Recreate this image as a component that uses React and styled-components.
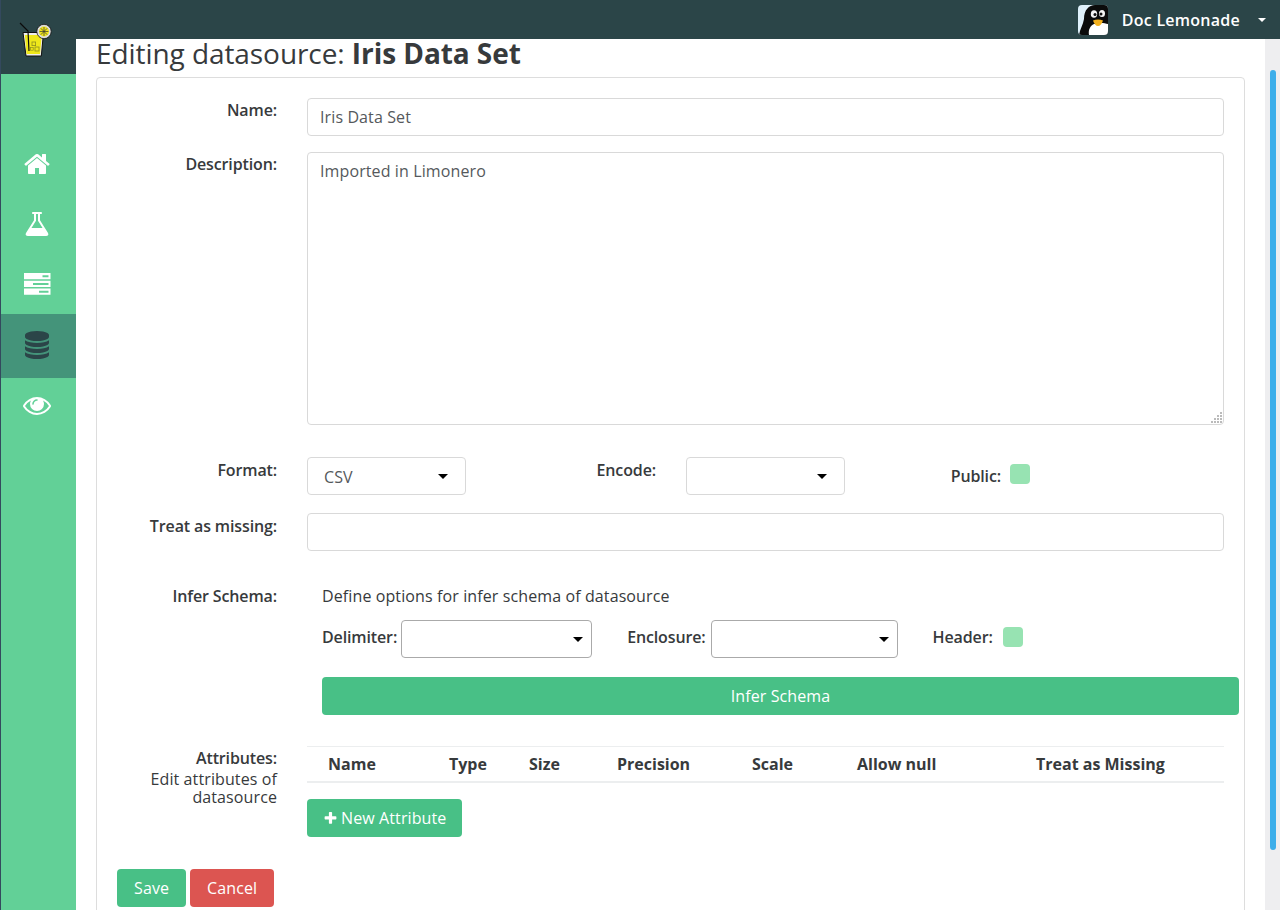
import React from 'react';
import styled, { createGlobalStyle } from 'styled-components';

const GlobalStyle = createGlobalStyle`
  html, body { margin: 0; height: 100%; overflow: hidden; }
  body { font-family: "Open Sans", "Liberation Sans", sans-serif; font-size: 16px; letter-spacing: .11px; color: #373a3c; background: #fff; }
  * { box-sizing: border-box; }
`;

const Shell = styled.div`
  display: flex;
  height: 910px;
  overflow: hidden;
`;

const Sidebar = styled.aside`
  width: 76px;
  flex: none;
  background: #62d097;
  border-left: 1px solid #34495e;
`;

const LogoBox = styled.div`
  height: 74px;
  margin-bottom: 60px;
  background: #2b4548;
  display: flex;
  align-items: flex-start;
  padding: 22px 0 0 17px;
`;

const NavItem = styled.div`
  display: flex;
  align-items: center;
  justify-content: center;
  width: 75px;
  height: ${p => (p.$active ? 64 : 60)}px;
  padding-right: 3px;
  padding-bottom: ${p => (p.$active ? 2 : 0)}px;
  color: ${p => (p.$active ? '#2b4548' : '#fff')};
  background: ${p => (p.$active ? '#44947a' : 'transparent')};
  &:last-child { margin-top: -3px; }
`;

const Main = styled.div`
  flex: 1;
  min-width: 0;
  display: flex;
  flex-direction: column;
`;

const Header = styled.header`
  height: 39px;
  flex: none;
  background: #2b4548;
  display: flex;
  align-items: center;
  justify-content: flex-end;
  padding-right: 14px;
  color: #fff;
  font-weight: 600;
  letter-spacing: .25px;
`;

const Avatar = styled.svg`
  width: 30px;
  height: 30px;
  margin-right: 14px;
  border-radius: 4px;
`;

const Caret = styled.span`
  width: 0;
  height: 0;
  margin-left: 18px;
  border-left: 4px solid transparent;
  border-right: 4px solid transparent;
  border-top: 4px solid currentColor;
`;

const Body = styled.div`
  flex: 1;
  min-height: 0;
  display: flex;
`;

const Content = styled.main`
  flex: 1;
  min-width: 0;
  padding: 0 20px;
`;

const ScrollTrack = styled.div`
  width: 15px;
  flex: none;
  background: #eeeef0;
  padding: 31px 4px 0 5px;
`;

const ScrollThumb = styled.div`
  height: 780px;
  border-radius: 3px;
  background: #3daeea;
`;

const Title = styled.h1`
  margin: 0;
  height: 38px;
  font-size: 28px;
  line-height: 28px;
  font-weight: 400;
  letter-spacing: -.07px;
  b { font-weight: 700; }
`;

const Panel = styled.section`
  width: 1149px;
  border: 1px solid #ddd;
  border-radius: 4px;
  padding: 20px 20px 20px 0;
`;

const Row = styled.div`
  display: flex;
  align-items: ${p => (p.$center ? 'center' : 'flex-start')};
  margin-bottom: ${p => p.$gap || 0}px;
`;

const Label = styled.label`
  flex: none;
  width: ${p => p.$width || 180}px;
  margin-right: ${p => p.$space ?? 30}px;
  padding-top: ${p => p.$top || 0}px;
  text-align: right;
  font-weight: 600;
  letter-spacing: -.13px;
  line-height: 24px;
`;

const Input = styled.input`
  flex: 1;
  min-width: 0;
  height: 38px;
  padding: 0 12px;
  border: 1px solid #d9d9d9;
  border-radius: 4px;
  font: inherit;
  letter-spacing: inherit;
  color: #55595c;
  outline: none;
`;

const TextAreaWrap = styled.div`
  position: relative;
  flex: 1;
  min-width: 0;
`;

const TextArea = styled.textarea`
  display: block;
  width: 100%;
  height: 273px;
  padding: 6px 12px;
  border: 1px solid #d9d9d9;
  border-radius: 4px;
  font: inherit;
  letter-spacing: inherit;
  line-height: 24px;
  color: #55595c;
  outline: none;
  resize: none;
`;

const Grip = styled.svg`
  position: absolute;
  right: 2px;
  bottom: 2px;
  width: 11px;
  height: 11px;
  fill: #bbb;
`;

const SelectWrap = styled.div`
  position: relative;
  flex: none;
  width: ${p => p.$width}px;
  &::after {
    content: '';
    position: absolute;
    right: ${p => (p.$narrow ? 9 : 18)}px;
    top: 17px;
    border-left: 5px solid transparent;
    border-right: 5px solid transparent;
    border-top: 5px solid #000;
  }
`;

const Select = styled.select`
  display: block;
  width: 100%;
  height: 38px;
  padding: 2px 16px 0;
  appearance: none;
  background: #fff;
  border: 1px solid ${p => (p.$dark ? '#aaa' : '#d9d9d9')};
  border-radius: 4px;
  font: inherit;
  letter-spacing: inherit;
  color: #55595c;
`;

const Check = styled.span`
  display: block;
  flex: none;
  width: 20px;
  height: 20px;
  border-radius: 4px;
  background: #97e3b2;
  margin-top: ${p => p.$top || 0}px;
  margin-bottom: ${p => p.$bottom || 0}px;
`;

const InferBox = styled.div`
  padding-left: 15px;
  flex: 1;
  min-width: 0;
`;

const Hint = styled.div`
  line-height: 24px;
  margin-bottom: 12px;
`;

const InlineLabel = styled.span`
  font-weight: 600;
  letter-spacing: -.13px;
  line-height: 24px;
  margin: ${p => p.$margin || 0};
`;

const WideButton = styled.button`
  display: block;
  width: 917px;
  height: 38px;
  margin-top: 19px;
  border: 0;
  border-radius: 4px;
  background: #48c086;
  color: #fff;
  font: inherit;
  letter-spacing: inherit;
`;

const LabelColumn = styled.div`
  flex: none;
  width: 180px;
  margin-right: 30px;
  text-align: right;
`;

const LabelTitle = styled.div`
  font-weight: 600;
  letter-spacing: -.13px;
  line-height: 24px;
`;

const LabelSub = styled.div`
  line-height: 18px;
`;

const TableColumn = styled.div`
  flex: 1;
  min-width: 0;
`;

const AttrHead = styled.div`
  display: grid;
  grid-template-columns: 121px 80px 88px 135px 105px 179px 1fr;
  height: 37px;
  padding-left: 21px;
  padding-bottom: 1px;
  align-items: center;
  border-top: 1px solid #eceeef;
  border-bottom: 2px solid #eceeef;
  font-weight: 700;
  letter-spacing: 0;
`;

const Button = styled.button`
  height: 38px;
  padding: 0 ${p => p.$pad || 17}px;
  border: 0;
  border-radius: 4px;
  background: ${p => (p.$danger ? '#dc5551' : '#48c086')};
  color: #fff;
  font: inherit;
  letter-spacing: inherit;
  display: inline-flex;
  align-items: center;
  gap: 3px;
`;

const AddButton = styled(Button)`
  margin-top: 16px;
`;

const Footer = styled.div`
  display: flex;
  gap: 4px;
  padding-left: 20px;
  margin-top: 32px;
`;

const Fa = ({ d, size = 28 }) => (
  <svg width={size} height={size} viewBox="0 0 1792 1792" fill="currentColor">
    <path d={d} />
  </svg>
);

const icons = {
  home: 'M1472 992v480q0 26-19 45t-45 19h-384v-384h-256v384h-384q-26 0-45-19t-19-45v-480q0-1 .5-3t.5-3l575-474 575 474q1 2 1 6zm223-69l-62 74q-8 9-21 11h-3q-13 0-21-7l-692-577-692 577q-12 8-24 7-13-2-21-11l-62-74q-8-10-7-23.5t11-21.5l719-599q32-26 76-26t76 26l244 204v-195q0-14 9-23t23-9h192q14 0 23 9t9 23v408l219 182q10 8 11 21.5t-7 23.5z',
  flask: 'M1591 1448q56 89 21.5 152.5t-140.5 63.5h-1152q-106 0-140.5-63.5t21.5-152.5l503-793v-399h-64q-26 0-45-19t-19-45 19-45 45-19h512q26 0 45 19t19 45-19 45-45 19h-64v399zm-779-725l-272 429h712l-272-429-20-31v-436h-128v436z',
  database: 'M896 768q237 0 443-43t325-127v170q0 69-103 128t-280 93.5-385 34.5-385-34.5-280-93.5-103-128v-170q119 84 325 127t443 43zm0 768q237 0 443-43t325-127v170q0 69-103 128t-280 93.5-385 34.5-385-34.5-280-93.5-103-128v-170q119 84 325 127t443 43zm0-384q237 0 443-43t325-127v170q0 69-103 128t-280 93.5-385 34.5-385-34.5-280-93.5-103-128v-170q119 84 325 127t443 43zm0-1152q208 0 385 34.5t280 93.5 103 128v128q0 69-103 128t-280 93.5-385 34.5-385-34.5-280-93.5-103-128v-128q0-69 103-128t280-93.5 385-34.5z',
  eye: 'M1664 960q-152-236-381-353 61 104 61 225 0 185-131.5 316.5t-316.5 131.5-316.5-131.5-131.5-316.5q0-121 61-225-229 117-381 353 133 205 333.5 326.5t434.5 121.5 434.5-121.5 333.5-326.5zm-720-384q0-20-14-34t-34-14q-125 0-214.5 89.5t-89.5 214.5q0 20 14 34t34 14 34-14 14-34q0-86 61-147t147-61q20 0 34-14t14-34zm848 384q0 34-20 69-140 230-376.5 368.5t-499.5 138.5-499.5-139-376.5-368q-20-35-20-69t20-69q140-229 376.5-368t499.5-139 499.5 139 376.5 368q20 35 20 69z',
  plus: 'M1600 736v192q0 40-28 68t-68 28h-416v416q0 40-28 68t-68 28h-192q-40 0-68-28t-28-68v-416h-416q-40 0-68-28t-28-68v-192q0-40 28-68t68-28h416v-416q0-40 28-68t68-28h192q40 0 68 28t28 68v416h416q40 0 68 28t28 68z',
};

const ServerIcon = () => (
  <svg width="28" height="22" viewBox="0 0 28 22" fill="currentColor">
    <path fillRule="evenodd" d="M1 0h26.5v6.2H1zM19.5 2.2v2h6v-2zM1 7.8h26.5V14H1zM10 9.9v2h15.5v-2zM1 15.6h26.5v6.2H1zM16 17.800v2h9.5v-2z" />
  </svg>
);

const Logo = () => (
  <svg width="40" height="38" viewBox="0 0 40 38">
    <path d="M5 10.5h20.5l-2.200 23.500H8z" fill="#eee" stroke="#111" strokeWidth="1" />
    <path d="M6.800 13h17l-1.800 19H8.500z" fill="#efe81a" />
    <rect x="14" y="20" width="3.600" height="3.600" fill="none" stroke="#8f8f20" strokeWidth=".8" />
    <rect x="17" y="25" width="4" height="4" fill="none" stroke="#8f8f20" strokeWidth=".8" />
    <rect x="12.600" y="25.600" width="2.600" height="2.600" fill="none" stroke="#8f8f20" strokeWidth=".7" />
    <circle cx="26" cy="9.500" r="7.200" fill="#ddd" stroke="#111" strokeWidth=".8" />
    <circle cx="26" cy="9.500" r="5" fill="#efe41c" />
    <path d="M26 5v9M21.600 9.500h8.800M22.800 6.300l6.400 6.400M29.200 6.300l-6.400 6.400" stroke="#333" strokeWidth=".7" />
    <path d="M2 1l8 8 1 20" fill="none" stroke="#0c0c0c" strokeWidth="1.200" />
  </svg>
);

const Penguin = () => (
  <Avatar viewBox="0 0 30 30">
    <rect width="30" height="30" fill="#dff0fa" />
    <path d="M1 30C2 24 5 20 6 14 6 5 11 0 17 0h13v30z" fill="#0b0b0b" />
    <path d="M11 30c-1-5 1-9 5-11 4-1.500 10-1.500 14 0v11z" fill="#fff" />
    <ellipse cx="16" cy="9" rx="3.200" ry="3.800" fill="#f4f4f4" />
    <ellipse cx="24" cy="8.500" rx="3" ry="3.500" fill="#f4f4f4" />
    <circle cx="17" cy="9.500" r="1.500" fill="#111" />
    <circle cx="23" cy="9" r="1.500" fill="#111" />
    <path d="M15 15.500c3-1.500 7-1.500 10 0-1 3.500-3 5.500-5 5.500s-4-2-5-5.500z" fill="#f2b01e" />
  </Avatar>
);

const columns = ['Name', 'Type', 'Size', 'Precision', 'Scale', 'Allow null', 'Treat as Missing'];
const gripDots = [[8, 0], [8, 3], [5, 3], [8, 6], [5, 6], [2, 6], [8, 9], [5, 9], [2, 9], [-1, 9]];

export default function App() {
  return (
    <>
      <GlobalStyle />
      <Shell>
        <Sidebar>
          <LogoBox><Logo /></LogoBox>
          <NavItem><Fa d={icons.home} /></NavItem>
          <NavItem><Fa d={icons.flask} /></NavItem>
          <NavItem><ServerIcon /></NavItem>
          <NavItem $active><Fa d={icons.database} /></NavItem>
          <NavItem><Fa d={icons.eye} /></NavItem>
        </Sidebar>
        <Main>
          <Header>
            <Penguin />
            Doc Lemonade
            <Caret />
          </Header>
          <Body>
            <Content>
              <Title>Editing datasource: <b>Iris Data Set</b></Title>
              <Panel>
                <Row $gap={16}>
                  <Label>Name:</Label>
                  <Input defaultValue="Iris Data Set" />
                </Row>
                <Row $gap={32}>
                  <Label>Description:</Label>
                  <TextAreaWrap>
                    <TextArea defaultValue="Imported in Limonero" />
                    <Grip viewBox="0 0 11 11">
                      {gripDots.map(([x, y]) => <rect key={`${x}-${y}`} x={x + 1} y={y} width="2" height="2" />)}
                    </Grip>
                  </TextAreaWrap>
                </Row>
                <Row $gap={18}>
                  <Label $top={1}>Format:</Label>
                  <SelectWrap $width={159}>
                    <Select defaultValue="csv"><option value="csv">CSV</option></Select>
                  </SelectWrap>
                  <Label $width={190} $top={1}>Encode:</Label>
                  <SelectWrap $width={159}>
                    <Select><option></option></Select>
                  </SelectWrap>
                  <Label $width={156} $space={9} $top={7}>Public:</Label>
                  <Check $top={7} />
                </Row>
                <Row $gap={33}>
                  <Label $top={1}>Treat as missing:</Label>
                  <Input />
                </Row>
                <Row $gap={31}>
                  <Label>Infer Schema:</Label>
                  <InferBox>
                    <Hint>Define options for infer schema of datasource</Hint>
                    <Row $center>
                      <InlineLabel $margin="0 4px 4px 0">Delimiter:</InlineLabel>
                      <SelectWrap $width={191} $narrow>
                        <Select $dark><option></option></Select>
                      </SelectWrap>
                      <InlineLabel $margin="0 5px 4px 35px">Enclosure:</InlineLabel>
                      <SelectWrap $width={187} $narrow>
                        <Select $dark><option></option></Select>
                      </SelectWrap>
                      <InlineLabel $margin="0 10px 4px 35px">Header:</InlineLabel>
                      <Check $bottom={4} />
                    </Row>
                    <WideButton>Infer Schema</WideButton>
                  </InferBox>
                </Row>
                <Row>
                  <LabelColumn>
                    <LabelTitle>Attributes:</LabelTitle>
                    <LabelSub>Edit attributes of datasource</LabelSub>
                  </LabelColumn>
                  <TableColumn>
                    <AttrHead>
                      {columns.map(c => <span key={c}>{c}</span>)}
                    </AttrHead>
                    <AddButton $pad={16}><Fa d={icons.plus} size={15} /> New Attribute</AddButton>
                  </TableColumn>
                </Row>
                <Footer>
                  <Button>Save</Button>
                  <Button $danger>Cancel</Button>
                </Footer>
              </Panel>
            </Content>
            <ScrollTrack><ScrollThumb /></ScrollTrack>
          </Body>
        </Main>
      </Shell>
    </>
  );
}
